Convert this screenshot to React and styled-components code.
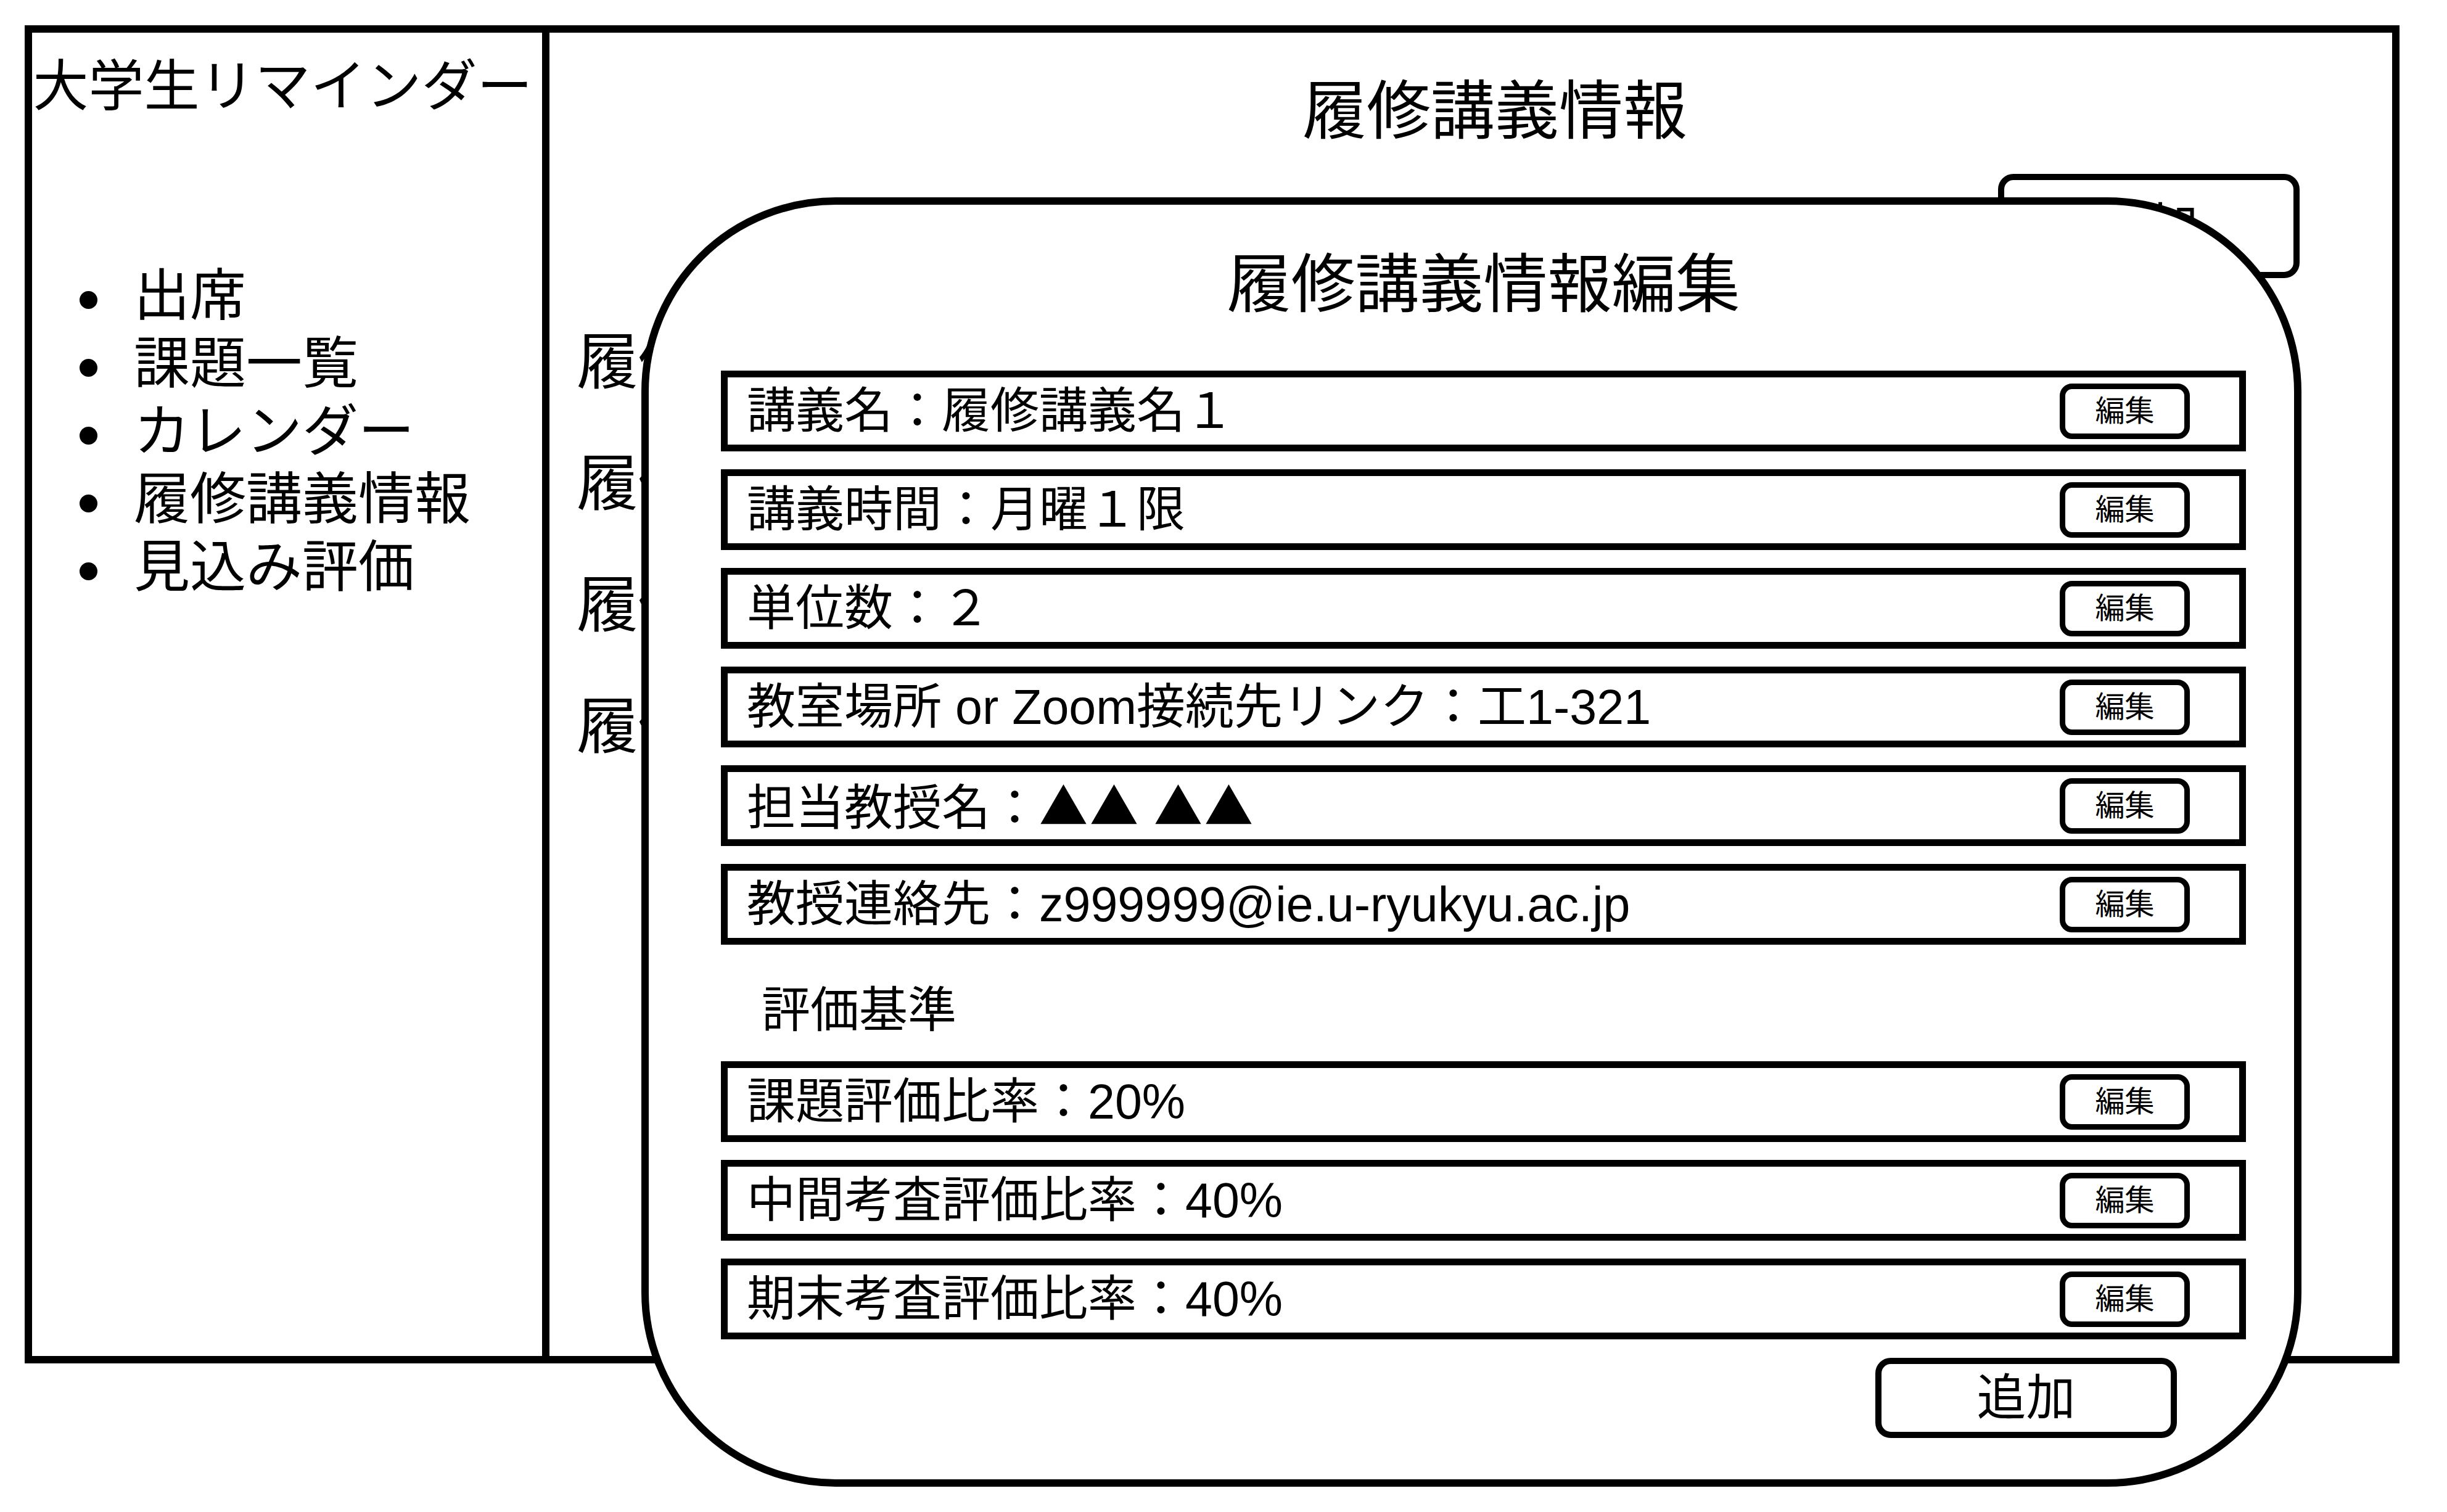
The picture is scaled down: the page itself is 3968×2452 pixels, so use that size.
import React from "react";
import styled, { createGlobalStyle } from "styled-components";

const GlobalStyle = createGlobalStyle`
  html, body { margin: 0; padding: 0; background: #fff; }
  body {
    font-family: "Liberation Sans", "Noto Sans CJK JP", sans-serif;
    color: #000;
  }
  *, *::before, *::after { box-sizing: border-box; }
`;

const Page = styled.div`
  position: relative;
  width: 3968px;
  height: 2452px;
  padding: 41px 0 0 40px;
  background: #fff;
  overflow: hidden;
`;

const Frame = styled.div`
  width: 3851px;
  height: 2170px;
  border: 12px solid #000;
  display: grid;
  grid-template-columns: 839px 1fr;
`;

const Sidebar = styled.aside`
  border-right: 12px solid #000;
  padding-top: 33px;
  display: flex;
  flex-direction: column;
`;

const AppTitle = styled.h1`
  margin: 0;
  padding-right: 14px;
  font-size: 90px;
  font-weight: 400;
  line-height: 108px;
  text-align: center;
  white-space: nowrap;
`;

const NavList = styled.ul`
  list-style: none;
  margin: 231px 0 0;
  padding: 0 0 0 165px;
`;

const NavItem = styled.li`
  display: flex;
  align-items: center;
  font-size: 91px;
  line-height: 110px;
  white-space: nowrap;
  &::before {
    content: "";
    flex: none;
    width: 29px;
    height: 29px;
    margin-left: -88px;
    margin-right: 59px;
    border-radius: 50%;
    background: #000;
    transform: translateY(6px);
  }
`;

const Main = styled.main`
  display: flex;
  flex-direction: column;
  padding-top: 66px;
  min-width: 0;
`;

const MainTitle = styled.h2`
  margin: 0;
  padding-left: 78px;
  font-size: 104px;
  font-weight: 400;
  line-height: 125px;
  text-align: center;
  white-space: nowrap;
`;

const Toolbar = styled.div`
  display: flex;
  justify-content: flex-end;
  margin-top: ${(p) => p.$top}px;
  padding-right: ${(p) => p.$right}px;
`;

const OutlineButton = styled.button`
  width: 489px;
  height: ${(p) => p.$height}px;
  border: 10px solid #000;
  border-radius: 25px;
  background: #fff;
  color: #000;
  font-family: inherit;
  font-size: 80px;
  line-height: 1;
  padding: 0;
  display: flex;
  align-items: center;
  justify-content: center;
`;

const CourseList = styled.ul`
  list-style: none;
  margin: 38px 0 0;
  padding: 0 0 0 44px;
`;

const CourseItem = styled.li`
  font-size: 100px;
  line-height: 197px;
  white-space: nowrap;
`;

const Modal = styled.section`
  position: absolute;
  left: 1040px;
  top: 320px;
  width: 2692px;
  height: 2091px;
  border: 12px solid #000;
  border-radius: 315px;
  background: #fff;
  display: flex;
  flex-direction: column;
  padding: 68px 78px 0 117px;
  z-index: 2;
`;

const ModalTitle = styled.h2`
  margin: 0 0 76px;
  font-size: 104px;
  font-weight: 400;
  line-height: 125px;
  text-align: center;
  white-space: nowrap;
`;

const FieldList = styled.div`
  display: flex;
  flex-direction: column;
  gap: 29px;
`;

const FieldRow = styled.div`
  height: 131px;
  border: 11px solid #000;
  display: flex;
  align-items: center;
  justify-content: space-between;
  padding: 0 80px 0 31px;
  font-size: 79px;
  line-height: 1;
  white-space: nowrap;
`;

const FieldText = styled.span`
  display: block;
`;

const Marks = styled.span`
  font-family: "Noto Sans CJK JP", sans-serif;
  letter-spacing: 3px;
`;

const EditButton = styled.button`
  flex: none;
  width: 211px;
  height: 90px;
  border: 9px solid #000;
  border-radius: 20px;
  background: #fff;
  color: #000;
  font-family: inherit;
  font-size: 48px;
  line-height: 1;
  padding: 0;
  display: flex;
  align-items: center;
  justify-content: center;
`;

const SectionLabel = styled.div`
  height: 189px;
  padding: 23px 0 0 66px;
  display: flex;
  align-items: center;
  font-size: 79px;
  line-height: 1;
`;

const basicFields = [
  { label: "講義名", value: "履修講義名１" },
  { label: "講義時間", value: "月曜１限" },
  { label: "単位数", value: "２" },
  { label: "教室場所 or Zoom接続先リンク", value: "工1-321" },
  {
    label: "担当教授名",
    value: (
      <>
        <Marks>▲▲</Marks> <Marks>▲▲</Marks>
      </>
    ),
  },
  { label: "教授連絡先", value: "z999999@ie.u-ryukyu.ac.jp" },
];

const gradeFields = [
  { label: "課題評価比率", value: "20%" },
  { label: "中間考査評価比率", value: "40%" },
  { label: "期末考査評価比率", value: "40%" },
];

const navItems = ["出席", "課題一覧", "カレンダー", "履修講義情報", "見込み評価"];
const courses = ["履修", "履修 ", "履修  ", "履修   "];

function Field({ label, value }) {
  return (
    <FieldRow>
      <FieldText>
        {label}：{value}
      </FieldText>
      <EditButton type="button">編集</EditButton>
    </FieldRow>
  );
}

export default function App() {
  return (
    <>
      <GlobalStyle />
      <Page>
        <Frame>
          <Sidebar>
            <AppTitle>大学生リマインダー</AppTitle>
            <NavList>
              {navItems.map((n) => (
                <NavItem key={n}>{n}</NavItem>
              ))}
            </NavList>
          </Sidebar>
          <Main>
            <MainTitle>履修講義情報</MainTitle>
            <Toolbar $top={38} $right={150}>
              <OutlineButton type="button" $height={169}>
                追加
              </OutlineButton>
            </Toolbar>
            <CourseList>
              {courses.map((c, i) => (
                <CourseItem key={i}>{c.trim()}</CourseItem>
              ))}
            </CourseList>
          </Main>
        </Frame>

        <Modal>
          <ModalTitle>履修講義情報編集</ModalTitle>
          <FieldList>
            {basicFields.map((f) => (
              <Field key={f.label} label={f.label} value={f.value} />
            ))}
          </FieldList>
          <SectionLabel>評価基準</SectionLabel>
          <FieldList>
            {gradeFields.map((f) => (
              <Field key={f.label} label={f.label} value={f.value} />
            ))}
          </FieldList>
          <Toolbar $top={30} $right={112}>
            <OutlineButton type="button" $height={130}>
              追加
            </OutlineButton>
          </Toolbar>
        </Modal>
      </Page>
    </>
  );
}
